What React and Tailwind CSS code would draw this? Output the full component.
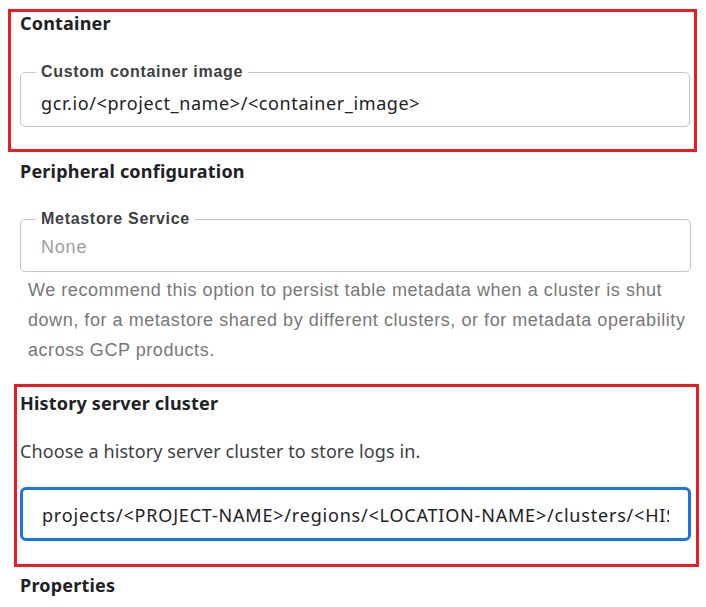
const heading = "text-[18px] font-bold leading-[22px] tracking-[0.2px] text-[#202124]";
const label =
  "absolute top-[-10px] left-[15px] bg-white px-[5px] text-[16px] font-bold leading-[18px] tracking-[0.7px] text-[#3c4043] font-['Liberation_Sans',Arial,sans-serif]";

export default function App() {
  return (
    <div className="w-[706px] h-[607px] overflow-hidden bg-white pt-[9px] font-['Noto_Sans',sans-serif]">
      <section className="ml-[8px] w-[689px] h-[143px] border-[3px] border-[#ed1c24] pl-[9px] pr-[4px]">
        <h2 className={heading}>Container</h2>
        <div className="relative mt-[38px] h-[55px] border border-[#c6c6c6] rounded-[5px] pl-[20px] pt-[18px]">
          <span className={label}>Custom container image</span>
          <div className="text-[18px] leading-[24px] tracking-[0.6px] text-[#202124]">
            gcr.io/&lt;project_name&gt;/&lt;container_image&gt;
          </div>
        </div>
      </section>

      <section className="ml-[20px] w-[671px]">
        <h2 className={`${heading} mt-[8px]`}>Peripheral configuration</h2>
        <div className="relative mt-[37px] h-[53px] border border-[#c6c6c6] rounded-[5px] pl-[20px] pt-[15px]">
          <span className={label}>Metastore Service</span>
          <div className="text-[18px] leading-[24px] tracking-[0.8px] text-[#9e9e9e] font-['Liberation_Sans',Arial,sans-serif]">
            None
          </div>
        </div>
        <p className="mt-[3px] pl-[8px] text-[18px] leading-[30px] tracking-[0.55px] text-[#777777] font-['Liberation_Sans',Arial,sans-serif]">
          We recommend this option to persist table metadata when a cluster is shut down, for a metastore shared by different clusters, or for metadata operability across GCP products.
        </p>
      </section>

      <section className="mt-[19px] ml-[14px] w-[685px] h-[183px] border-[3px] border-[#ed1c24] pl-[3px]">
        <h2 className={`${heading} mt-[5px]`}>History server cluster</h2>
        <p className="mt-[25px] text-[18px] leading-[24px] tracking-[0.1px] text-[#3c4043]">
          Choose a history server cluster to store logs in.
        </p>
        <div className="mt-[24px] w-[671px] h-[54px] border-[3px] border-[#1a73e8] rounded-[6px] px-[19px] pt-[2px] flex items-center">
          <div className="flex-1 min-w-0 text-[18px] leading-[24px] tracking-[0.8px] text-[#202124] whitespace-nowrap overflow-hidden">
            projects/&lt;PROJECT-NAME&gt;/regions/&lt;LOCATION-NAME&gt;/clusters/&lt;HISTORY-SERVER-CLUSTER&gt;
          </div>
        </div>
      </section>

      <h2 className={`${heading} ml-[20px] mt-[7px]`}>Properties</h2>
    </div>
  );
}
